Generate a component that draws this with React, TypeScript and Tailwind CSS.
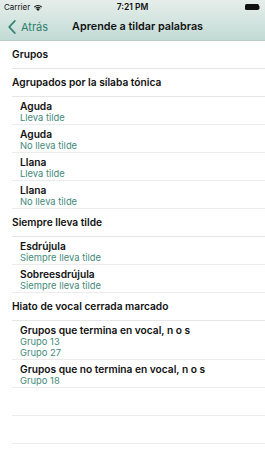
interface Item {
  title: string;
  lines: string[];
}

interface Section {
  header: string;
  items: Item[];
}

const sections: Section[] = [
  {
    header: 'Agrupados por la sílaba tónica',
    items: [
      { title: 'Aguda', lines: ['Lleva tilde'] },
      { title: 'Aguda', lines: ['No lleva tilde'] },
      { title: 'Llana', lines: ['Lleva tilde'] },
      { title: 'Llana', lines: ['No lleva tilde'] },
    ],
  },
  {
    header: 'Siempre lleva tilde',
    items: [
      { title: 'Esdrújula', lines: ['Siempre lleva tilde'] },
      { title: 'Sobreesdrújula', lines: ['Siempre lleva tilde'] },
    ],
  },
  {
    header: 'Hiato de vocal cerrada marcado',
    items: [
      { title: 'Grupos que termina en vocal, n o s', lines: ['Grupo 13', 'Grupo 27'] },
      { title: 'Grupos que no termina en vocal, n o s', lines: ['Grupo 18'] },
    ],
  },
];

function Wifi() {
  return (
    <svg width="10" height="7" viewBox="0 0 11 8">
      <path d="M5.5 8 L3.6 5.9 A2.7 2.7 0 0 1 7.4 5.9 Z" fill="#111" />
      <path d="M2.4 4.7 A4.4 4.4 0 0 1 8.6 4.7 L7.8 5.5 A3.3 3.3 0 0 0 3.2 5.5 Z" fill="#111" />
      <path d="M0.8 3 A6.8 6.8 0 0 1 10.2 3 L9.3 3.9 A5.5 5.5 0 0 0 1.7 3.9 Z" fill="#111" />
    </svg>
  );
}

function Battery() {
  return (
    <div className="flex items-center">
      <div className="w-[14px] h-[6px] rounded-[1.5px] bg-[#111]" />
      <div className="w-[1px] h-[3px] bg-[#888]" />
    </div>
  );
}

function BackChevron() {
  return (
    <svg width="8" height="14" viewBox="0 0 8 14" fill="none">
      <path d="M6.8 1 L1.2 7 L6.8 13" stroke="#2e7f6b" strokeWidth="1.8" strokeLinecap="round" strokeLinejoin="round" />
    </svg>
  );
}

export default function App() {
  return (
    <div
      className="w-[265px] h-[471px] bg-white overflow-hidden text-[#111]"
      style={{ fontFamily: 'Inter, "Noto Sans", sans-serif' }}
    >
      {/* status bar + nav */}
      <div className="h-[41px] bg-gradient-to-b from-[#e6eeeb] to-[#c2dbd5] border-b border-[#b9ccc7]">
        <div className="h-[14px] flex items-center justify-between pl-[4px] pr-[5px] relative">
          <div className="flex items-center gap-[3px] text-[8px] leading-none">
            <span>Carrier</span>
            <Wifi />
          </div>
          <div className="absolute left-0 right-0 text-center text-[8.5px] font-semibold leading-none">7:21 PM</div>
          <Battery />
        </div>
        <div className="h-[26px] flex items-center">
          <div className="flex items-center gap-[5px] text-[#2e7f6b] text-[11px] pl-[8px]">
            <BackChevron />
            <span>Atrás</span>
          </div>
          <div className="ml-[24px] text-[10.8px] font-semibold">Aprende a tildar palabras</div>
        </div>
      </div>

      <div className="pl-[12px]">
        <div className="h-[28px] flex items-center pt-[1px] text-[10.2px] font-semibold border-b border-[#e6e6e6]">
          Grupos
        </div>
        {sections.map((s) => (
          <div key={s.header}>
            <div className="h-[28px] flex items-center pt-[1px] text-[10.2px] font-semibold border-b border-[#e6e6e6]">
              {s.header}
            </div>
            {s.items.map((it, i) => (
              <div key={i} className="pl-[8px] pt-[3px] pb-[1px] min-h-[28px] border-b border-[#ececec]">
                <div className="text-[10.2px] font-semibold leading-[12px]">{it.title}</div>
                {it.lines.map((l) => (
                  <div key={l} className="text-[9.4px] leading-[11px] text-[#3f8a7a]">
                    {l}
                  </div>
                ))}
              </div>
            ))}
          </div>
        ))}
        <div className="h-[28px] border-b border-[#ececec]" />
        <div className="h-[28px] border-b border-[#ececec]" />
      </div>
    </div>
  );
}
